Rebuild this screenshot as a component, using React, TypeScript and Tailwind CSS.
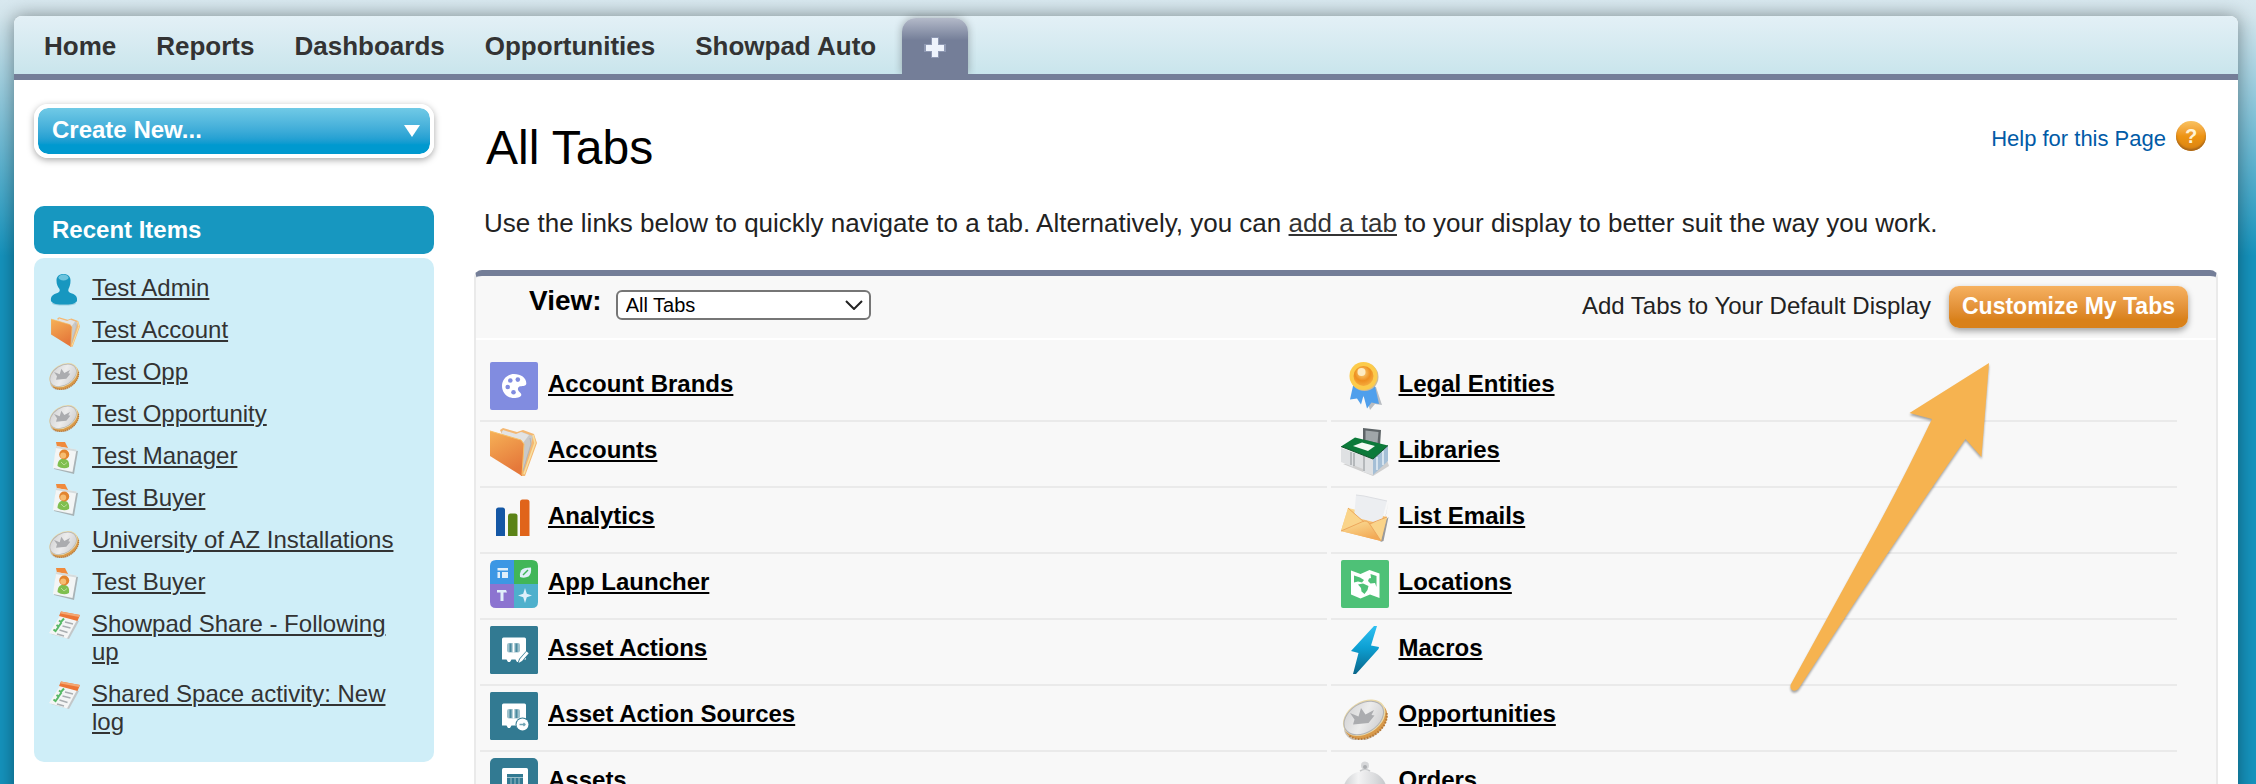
import { FC, ReactNode } from "react";

type IconProps = {
  className?: string;
};

type LinkItem = {
  label: string;
  Icon: FC<IconProps>;
};

const Svg = ({
  className,
  size = 48,
  children,
}: {
  className?: string;
  size?: number;
  children: ReactNode;
}) => (
  <svg
    className={className}
    viewBox={`0 0 ${size} ${size}`}
    fill="none"
    aria-hidden="true"
  >
    {children}
  </svg>
);

const UserIcon: FC<IconProps> = ({ className }) => (
  <Svg className={className} size={32}>
    <ellipse cx="16" cy="29.500" rx="12" ry="2" fill="#9fcfdf" />
    <path
      d="M15.500 0C20 0 22.500 2.500 22.500 6.500c0 4-.8 6-2 8.500-.8 2 .3 3.500 3.500 4.500 4 1.500 5.500 3.500 5 7.500-1.500 3-7 3.500-13 3.500S4.500 30 3 27c-.5-4 1-6 5-7.500 3.200-1 4.300-2.500 3.500-4.500-1.800-2.500-3-4.500-3-8.500C8.500 2.500 11 0 15.500 0z"
      fill="#1797c0"
    />
    <ellipse cx="15.500" cy="3.500" rx="5" ry="3" fill="#6cc3dd" />
  </Svg>
);

const FolderShapes = ({ id }: { id: string }) => (
  <>
    <defs>
      <linearGradient id={id} x1="0" y1="0" x2="0.400" y2="1">
        <stop offset="0" stopColor="#f6b157" />
        <stop offset="1" stopColor="#e5783a" />
      </linearGradient>
    </defs>
    <path d="M10 2l3-2 14 4 6-2 11 4 3 9-12 33h-4z" fill="#f4b873" />
    <path d="M11 3l15 4 6-3 11 4-2 8-8 26z" fill="#c9c9c9" />
    <path d="M13 2l13 4 5-2 8 3-6 8-22-9z" fill="#e3e3e3" />
    <path d="M43 7l2 8-11 31" stroke="#f8e0a0" strokeWidth="1.500" />
    <path d="M40 10l1 6-8 27" stroke="#b5b5b5" />
    <path d="M0 3l31 9 3 4-2 32L0 28z" fill={`url(#${id})`} />
    <path d="M0 3l31 9 3 4-2 31" stroke="#f6c069" />
  </>
);

const AccountIcon: FC<IconProps> = ({ className }) => (
  <Svg className={className}>
    <FolderShapes id="folder" />
  </Svg>
);

const SmallAccountIcon: FC<IconProps> = ({ className }) => (
  <svg className={className} viewBox="-5 0 52 48" aria-hidden="true" fill="none">
    <FolderShapes id="folder-small" />
  </svg>
);

const CoinIcon: FC<IconProps> = ({ className }) => (
  <Svg className={className}>
    <defs>
      <linearGradient id="coin-face" x1="0" y1="0" x2="1" y2="1">
        <stop offset="0" stopColor="#d0d0d1" />
        <stop offset="0.500" stopColor="#ececec" />
        <stop offset="1" stopColor="#cacacc" />
      </linearGradient>
    </defs>
    <g transform="rotate(-32 24 27)">
      <ellipse cx="22.500" cy="30" rx="23" ry="16.500" fill="#c9c2b8" />
      <ellipse cx="24" cy="29" rx="23" ry="16.500" fill="#d99a4a" />
      <path
        d="M2 33c6 16 38 17 44-1"
        stroke="#b5793a"
        strokeWidth="2"
        strokeDasharray="1.500 1.500"
      />
      <ellipse cx="24" cy="25.500" rx="23" ry="16" fill="#ead9a8" />
      <ellipse cx="23.500" cy="25.500" rx="22" ry="15" fill="#b2b2b4" />
      <ellipse cx="23.500" cy="25.500" rx="21" ry="14" fill="url(#coin-face)" />
    </g>
    <path
      d="M9 21l8.500 3.500L20 16l4.500 6.500L33 18l-2.500 5 3 .5-6 7.500L12 32.500l1.500-5z"
      fill="#abacaf"
    />
  </Svg>
);

const ContactIcon: FC<IconProps> = ({ className }) => (
  <Svg className={className} size={32}>
    <path d="M8 0h9l3 6-2 2-9-3z" fill="#f08a3c" />
    <path d="M8 5l22 4-4 23L6 27z" fill="#a9b3b6" />
    <path d="M8 4l20.500 3.500-4 22.500L5 26z" fill="#f3f5f5" />
    <path d="M8 4l20.500 3.500-.4 2L7.700 6z" fill="#d6dcdd" />
    <path d="M9.500 24c.3-5 2.500-7.500 6.300-7.200 4 .3 6 3.200 5.200 8.200-3.500 2-8 1.500-11.500-1z" fill="#7fbf4f" />
    <path d="M13 20l3 3 3-2.500" stroke="#b9dc95" />
    <circle cx="16.200" cy="12.500" r="5" fill="#e2852f" />
    <circle cx="15.200" cy="13.500" r="3" fill="#f6bd72" />
  </Svg>
);

const TaskIcon: FC<IconProps> = ({ className }) => (
  <Svg className={className} size={32}>
    <path d="M13 7l18 4-10 18L3 24z" fill="#c2c7c9" />
    <path d="M12 6l17 4-10 18.500L1 23z" fill="#f4f5f5" />
    <path d="M13 1.500L32 5l-2.500 6L11 6z" fill="#ec7636" />
    <path d="M13 1.500L32 5l-1 2-18.500-3.500z" fill="#f4a873" />
    <path
      d="M17 12l8 2M14.500 16l8 2M11.500 20l8 2.500M9 24l7 2"
      stroke="#a9aeb1"
      strokeWidth="1.500"
    />
    <path
      d="M11 10.500l2 1.500 3-3.500M8.500 15l2 1.500 3-4M5.500 19.500l2 1.500 3-4"
      stroke="#57b966"
      strokeWidth="2"
    />
  </Svg>
);

const BrandIcon: FC<IconProps> = ({ className }) => (
  <Svg className={className}>
    <rect width="48" height="48" rx="2" fill="#818ce0" />
    <path
      d="M24 12c7 0 12.500 4 12.300 9.500-.2 2.700-3.300 2.500-5.800 2.700-3 .4-3.500 3.800-1 5.800 2.400 1.800 2.400 4 0 5-1.800.8-3.800 1-5.500 1-7 0-12-5.400-12-12 0-7 5.500-12 12-12z"
      fill="#fff"
    />
    <g fill="#818ce0">
      <circle cx="20.300" cy="18.500" r="2.300" />
      <circle cx="27.800" cy="17.600" r="2.300" />
      <circle cx="17.700" cy="25" r="2.300" />
      <circle cx="23.500" cy="30.300" r="2.300" />
    </g>
  </Svg>
);

const AnalyticsIcon: FC<IconProps> = ({ className }) => (
  <Svg className={className}>
    <path d="M6 42V16q0-2.500 2.500-2.500h4q2.500 0 2.500 2.500v26z" fill="#1457a5" />
    <path d="M18 42V22q0-2.500 2.500-2.500h4.500q2.500 0 2.500 2.500v20z" fill="#5b8317" />
    <path d="M30 42V8q0-2.500 2.500-2.500H37q2.500 0 2.500 2.500v34z" fill="#e0641a" />
  </Svg>
);

const LauncherIcon: FC<IconProps> = ({ className }) => (
  <Svg className={className}>
    <path d="M24 0v24H0V6q0-6 6-6z" fill="#3c97e4" />
    <path d="M24 0h18q6 0 6 6v18H24z" fill="#41b658" />
    <path d="M0 24h24v24H6q-6 0-6-6z" fill="#8c74d0" />
    <path d="M24 24h24v18q0 6-6 6H24z" fill="#4eb0cc" />
    <g fill="#e0effa">
      <path d="M7.500 8H18v2.500H7.500zM7.500 12H10v6H7.500zM12 12h6v6h-6z" />
      <path d="M31 10.500q2-3 10-3 .8 6-2.500 9-4 2-8.500.5-.5-3.500 1-6.500z" />
      <path d="M7 30h9l1 2.500h-3.500V41h-3v-8.500H7z" />
      <path d="M35 28l1.800 5.700 5.200 1.800-5.200 1.800L35 43l-1.800-5.700-5.200-1.800 5.200-1.800z" />
    </g>
    <path d="M33 15l5-5" stroke="#41b658" strokeWidth="1.500" />
  </Svg>
);

// White safe shared by the asset action tabs.
const Safe = () => (
  <>
    <path
      d="M13.500 11.500h21q1.500 0 1.500 1.500v20.500h-5.500l-1.500 2.500h-2l-1.500-2.500h-4L20 36h-2l-1.500-2.500H12V13q0-1.500 1.500-1.500z"
      fill="#fff"
    />
    <rect x="17" y="17" width="13" height="9.500" rx="2" fill="#9fc2cd" />
    <path d="M20.500 17.500v8.500M26.500 17.500v8.500" stroke="#4b8a9f" strokeWidth="2" />
    <path d="M23.500 17v9.500" stroke="#fff" strokeWidth="1.500" />
  </>
);

const AssetActionIcon: FC<IconProps> = ({ className }) => (
  <Svg className={className}>
    <rect width="48" height="48" rx="1.500" fill="#327a92" />
    <Safe />
    <path d="M27 39l2-6 8-9 3.500 3-8 8.500z" fill="#327a92" />
    <path d="M28.500 37l1.500-4 6.500-7.500 2.200 1.800-6.700 7.700z" fill="#fff" />
  </Svg>
);

const AssetSourceIcon: FC<IconProps> = ({ className }) => (
  <Svg className={className}>
    <rect width="48" height="48" rx="1.500" fill="#327a92" />
    <Safe />
    <circle cx="32.500" cy="32.500" r="7" fill="#327a92" />
    <circle cx="32.500" cy="32.500" r="6" fill="#fff" />
    <path d="M29.500 32.500h6m-2-1.500l1.500 1.500-1.500 1.500" stroke="#6fa3b3" strokeWidth="1.300" />
  </Svg>
);

const AssetIcon: FC<IconProps> = ({ className }) => (
  <Svg className={className}>
    <rect width="48" height="48" rx="5" fill="#327a92" />
    <rect x="12" y="10" width="26" height="25" rx="1.500" fill="#fff" />
    <rect x="17" y="16" width="16" height="13" fill="#327a92" />
    <path d="M17 19.500h16M21 19v10M25 19v10M29 19v10" stroke="#9cc0cb" />
  </Svg>
);

const LegalIcon: FC<IconProps> = ({ className }) => (
  <Svg className={className}>
    <defs>
      <radialGradient id="medal" cx="0.450" cy="0.350" r="0.650">
        <stop offset="0" stopColor="#fbd37d" />
        <stop offset="0.600" stopColor="#ee8f20" />
        <stop offset="1" stopColor="#f5ab3d" />
      </radialGradient>
    </defs>
    <path d="M13 26l13 12 3 10 5-6 7 1-6-18z" fill="#b9bdc2" />
    <path d="M12 24L9 37.500l7-1 4 6 2.500-9 3.500 13 4.500-6 7.500 1.500L34 24z" fill="#4f9fec" />
    <circle cx="23.500" cy="15" r="14" fill="#cbbb9a" />
    <circle cx="22.500" cy="14" r="14" fill="#fccb4b" />
    <circle cx="22.500" cy="14" r="10" fill="url(#medal)" />
    <circle cx="20.500" cy="10" r="4" fill="#fdebc2" />
  </Svg>
);

const LibraryIcon: FC<IconProps> = ({ className }) => (
  <Svg className={className}>
    <path d="M2 36l30 12 16-10-2-6z" fill="#cfcfcf" />
    <path d="M22 0l18 2-1 16-17-4z" fill="#5e6467" />
    <path d="M24.500 2.500l13 1.500-1 11-12-3z" fill="#a0a6a9" />
    <path d="M0 20l32 11v16l-10-3v-3l-10-4v2L0 34z" fill="#dfe1e3" />
    <path d="M10 24v13M13 25v13M23 28v15" stroke="#8c9195" />
    <path d="M32 31l15-14v16L32 47z" fill="#a5bfd6" />
    <path d="M36 29v13M42 23v14" stroke="#d6e3ee" strokeWidth="2" />
    <path d="M0 18.500L14 9.500l33 8L32 31z" fill="#0c7a3a" />
    <path d="M0 18.500L32 31l15-13.500" stroke="#14522d" />
    <path d="M12 18l9-3.500L34 18l-7 5z" fill="#f4faf5" />
  </Svg>
);

const EmailIcon: FC<IconProps> = ({ className }) => (
  <Svg className={className}>
    <defs>
      <linearGradient id="envelope" x1="0" y1="0" x2="0.500" y2="1">
        <stop offset="0" stopColor="#fbe09a" />
        <stop offset="1" stopColor="#f2a955" />
      </linearGradient>
    </defs>
    <path d="M47.500 8l-4 19 4-4-5 24-3 1z" fill="#9b9b9b" />
    <path d="M7 14l39 9-6 24L0 37z" fill="url(#envelope)" />
    <path d="M15 1l8 1 23 5-6 23-27-7z" fill="#eceef1" />
    <path d="M15 1l8 1 23 5" stroke="#dcdee2" />
    <path d="M7 14l16 14L0 37zM46 23l-18 8 12 16z" fill="#fad48a" />
    <path d="M0 37l23-10q3-.5 5 2l12 18z" fill="url(#envelope)" />
    <path d="M7 14l16 14M46 23l-18 7M0 37l23-10q3-.5 5 2l12 18" stroke="#eca75c" />
  </Svg>
);

const LocationIcon: FC<IconProps> = ({ className }) => (
  <Svg className={className}>
    <rect width="48" height="48" rx="2" fill="#4ec177" />
    <path
      d="M10 10.500L19.500 14l9-4 10 3.500V38l-9.500-3.500-9.500 4L10 34.500z"
      fill="#fff"
    />
    <path d="M13 15.500l6 2 4 2.500-2 2.500-4-1-4 1z" fill="#4ec177" />
    <path d="M17 24.500l5-1 5.500 2.500-1 4-3 4-3-2.500-.5-3.500z" fill="#4ec177" />
    <path d="M29.500 14l6 2V27l-1.500-4-4.500.5-2.500-2.500 1-2.500 2-.5z" fill="#4ec177" />
  </Svg>
);

const MacroIcon: FC<IconProps> = ({ className }) => (
  <Svg className={className}>
    <defs>
      <linearGradient id="bolt" x1="0" y1="0" x2="0" y2="1">
        <stop offset="0" stopColor="#2fc0f2" />
        <stop offset="0.450" stopColor="#0da0d3" />
        <stop offset="1" stopColor="#0a668a" />
      </linearGradient>
    </defs>
    <path d="M33 0h3l-6 19.500 8 1.500-.5 2L15 48h-3l5.500-21-7.500-2z" fill="url(#bolt)" />
  </Svg>
);

const OrderIcon: FC<IconProps> = ({ className }) => (
  <Svg className={className}>
    <defs>
      <linearGradient id="dome" x1="0" y1="0" x2="1" y2="0">
        <stop offset="0" stopColor="#cdcfd1" />
        <stop offset="0.350" stopColor="#f3f3f4" />
        <stop offset="0.700" stopColor="#dcdddf" />
        <stop offset="1" stopColor="#c3c5c8" />
      </linearGradient>
    </defs>
    <ellipse cx="24" cy="35" rx="24" ry="11" fill="#8fa7cf" />
    <path d="M2 34c0-12 9-21 22-21s22 9 22 21c-12 6-32 6-44 0z" fill="url(#dome)" />
    <path d="M19 13q5-3 10 0" stroke="#c6c8ca" strokeWidth="1.500" />
    <circle cx="24" cy="7.500" r="4" fill="#d6d7d9" />
    <circle cx="24" cy="9" r="2" fill="#acaeb1" />
  </Svg>
);

const navTabs = [
  "Home",
  "Reports",
  "Dashboards",
  "Opportunities",
  "Showpad Auto",
];

const recentItems: LinkItem[] = [
  { label: "Test Admin", Icon: UserIcon },
  { label: "Test Account", Icon: SmallAccountIcon },
  { label: "Test Opp", Icon: CoinIcon },
  { label: "Test Opportunity", Icon: CoinIcon },
  { label: "Test Manager", Icon: ContactIcon },
  { label: "Test Buyer", Icon: ContactIcon },
  { label: "University of AZ Installations", Icon: CoinIcon },
  { label: "Test Buyer", Icon: ContactIcon },
  { label: "Showpad Share - Following up", Icon: TaskIcon },
  { label: "Shared Space activity: New log", Icon: TaskIcon },
];

const tabRows: [LinkItem, LinkItem][] = [
  [
    { label: "Account Brands", Icon: BrandIcon },
    { label: "Legal Entities", Icon: LegalIcon },
  ],
  [
    { label: "Accounts", Icon: AccountIcon },
    { label: "Libraries", Icon: LibraryIcon },
  ],
  [
    { label: "Analytics", Icon: AnalyticsIcon },
    { label: "List Emails", Icon: EmailIcon },
  ],
  [
    { label: "App Launcher", Icon: LauncherIcon },
    { label: "Locations", Icon: LocationIcon },
  ],
  [
    { label: "Asset Actions", Icon: AssetActionIcon },
    { label: "Macros", Icon: MacroIcon },
  ],
  [
    { label: "Asset Action Sources", Icon: AssetSourceIcon },
    { label: "Opportunities", Icon: CoinIcon },
  ],
  [
    { label: "Assets", Icon: AssetIcon },
    { label: "Orders", Icon: OrderIcon },
  ],
];

const TabBar = () => (
  <nav className="flex items-stretch h-16 rounded-t-lg border-b-6 border-[#747e98] bg-linear-to-b from-[#e3f0f6] to-[#c9e5ec] pl-[30px]">
    <ul className="flex items-center gap-10 pt-0.5">
      {navTabs.map((tab) => (
        <li key={tab}>
          <a
            href="#"
            className="block font-bold text-[26px] text-[#333] leading-[30px]"
          >
            {tab}
          </a>
        </li>
      ))}
    </ul>
    <a
      href="#"
      aria-label="All Tabs"
      className="flex justify-center items-center bg-linear-to-b from-[#b4bac9] via-[#747e98] via-40% to-[#747e98] shadow-[0_0_8px_rgba(0,0,0,0.3)] mt-0.5 ml-[26px] rounded-t-[14px] w-[66px] [clip-path:inset(-8px_-8px_0_-8px)]"
    >
      <svg viewBox="0 0 24 24" className="mt-1 w-6 h-6" aria-hidden="true">
        <path
          d="M8 1h8v7h7v8h-7v6H8v-6H1V8h7z"
          fill="#8f99b3"
        />
        <path d="M9 2h6v7h6v6h-6v6H9v-6H3V9h6z" fill="#eef3fc" />
      </svg>
    </a>
  </nav>
);

const Sidebar = () => (
  <aside className="w-[400px] shrink-0 pt-6">
    <button
      type="button"
      className="flex justify-between items-center bg-linear-to-b from-[#70cae6] to-[#0099cf] to-80% bg-clip-padding shadow-[0_2px_7px_rgba(0,0,0,0.35)] px-3.5 border-4 border-white rounded-[14px] w-full h-[54px] font-bold text-white text-2xl"
    >
      <span className="pb-0.5 leading-7">Create New...</span>
      <svg viewBox="0 0 16 12" className="-mr-1 w-4 h-3" aria-hidden="true">
        <path d="M0 0h16L8 12z" fill="#fff" />
      </svg>
    </button>

    <h2 className="bg-[#1797c0] mt-12 px-[18px] py-2.5 rounded-[10px] font-bold text-2xl text-white leading-7">
      Recent Items
    </h2>
    <ul className="flex flex-col gap-2.5 bg-[#cfeef8] mt-1 pt-4 pr-5 pb-[22px] pl-3.5 rounded-[10px]">
      {recentItems.map(({ label, Icon }, index) => (
        <li key={index} className="flex items-start gap-3">
          <Icon className="w-8 h-8 shrink-0" />
          <a
            href="#"
            className="pb-1 text-[#333] text-2xl underline decoration-2 underline-offset-2 leading-7"
          >
            {label}
          </a>
        </li>
      ))}
    </ul>
  </aside>
);

const TabCell = ({ label, Icon }: LinkItem) => (
  <td className="pt-1.5 pb-2.5 pl-2.5 border-[#eaeaea] border-b-2 w-1/2">
    <div className="flex items-center gap-2.5">
      <Icon className="w-12 h-12 shrink-0" />
      <a
        href="#"
        className="pb-1 font-bold text-2xl text-black underline decoration-2 underline-offset-2 leading-7"
      >
        {label}
      </a>
    </div>
  </td>
);

const Arrow = () => (
  <svg
    viewBox="1780 355 220 345"
    className="top-[79px] right-[216px] absolute drop-shadow-[0_2px_1px_rgba(0,0,0,0.35)] w-[220px] h-[345px] pointer-events-none"
    aria-hidden="true"
  >
    <path
      d="M1989 363L1909.500 413 1932 419Q1898 490 1864 551L1791 684C1788.500 690 1795 693.500 1799 688Q1880 562 1965.500 439L1981.500 457z"
      fill="#f6b350"
    />
  </svg>
);

const TabsPanel = () => (
  <section className="relative bg-[#f8f8f8] mt-8 border-[#eaeaea] border-x-2 border-t-6 border-t-[#747e98] rounded-t-lg grow">
    <div className="flex items-center pr-7 pl-[53px] border-white border-b-2 h-16">
      <label
        htmlFor="view"
        className="pb-3 font-bold text-[28px] text-black leading-8"
      >
        View:
      </label>
      <div className="relative mb-1 ml-3.5">
        <select
          id="view"
          defaultValue="all"
          className="block bg-white pl-2 border-2 border-[#767676] rounded-md w-[255px] h-[30px] text-black text-xl leading-[26px] appearance-none"
        >
          <option value="all">All Tabs</option>
        </select>
        <svg
          viewBox="0 0 18 10"
          className="top-2.5 right-2 absolute w-[18px] h-2.5 pointer-events-none"
          fill="none"
          aria-hidden="true"
        >
          <path d="M1 1l8 8 8-8" stroke="#222" strokeWidth="2" />
        </svg>
      </div>
      <span className="mr-[18px] ml-auto pb-0.5 text-2xl text-[#222] leading-7">
        Add Tabs to Your Default Display
      </span>
      <button
        type="button"
        className="bg-linear-to-b from-[#f6b160] to-[#d9811a] to-80% shadow-[0_3px_6px_rgba(0,0,0,0.35)] px-[13px] pb-0.5 rounded-[10px] h-[42px] font-bold text-[23px] text-white leading-7"
      >
        Customize My Tabs
      </button>
    </div>

    <div className="pt-4 pr-[35px]">
      <table className="border-separate border-spacing-x-1 border-spacing-y-0 w-full table-fixed">
        <tbody>
          {tabRows.map(([left, right]) => (
            <tr key={left.label}>
              <TabCell {...left} />
              <TabCell {...right} />
            </tr>
          ))}
        </tbody>
      </table>
    </div>

    <Arrow />
  </section>
);

const HelpLink = () => (
  <a
    href="#"
    className="flex items-center gap-2.5 mr-3 text-[#015ba7] text-[22px] leading-[26px]"
  >
    <span className="pt-1.5">Help for this Page</span>
    <span className="flex justify-center items-center bg-linear-to-b from-[#f9c25e] via-[#ee9412] to-[#d98312] shadow-[inset_0_-2px_2px_#a8661a] rounded-full w-[30px] h-[30px] font-bold text-[#fff3d6] text-xl">
      ?
    </span>
  </a>
);

const App = () => {
  return (
    <div className="bg-[#1593bd] bg-[linear-gradient(to_bottom,#d8e8ef_0px,#d3e5ec_16px,#1593bd_256px)] bg-no-repeat pt-4 pr-[18px] pl-3.5 h-screen overflow-hidden font-['Liberation_Sans',Arial,sans-serif]">
      <div className="flex flex-col bg-white shadow-[0_0_18px_rgba(0,0,0,0.4)] rounded-t-lg min-h-full">
        <TabBar />
        <div className="flex gap-10 px-5 grow">
          <Sidebar />
          <main className="flex flex-col min-w-0 grow">
            <div className="flex justify-between items-start pt-10">
              <h1 className="pl-3 text-5xl text-black leading-14">All Tabs</h1>
              <HelpLink />
            </div>
            <p className="mt-8 pl-2.5 text-[#222] text-[26px] leading-[30px]">
              Use the links below to quickly navigate to a tab. Alternatively,
              you can{" "}
              <a
                href="#"
                className="text-[#333] underline decoration-2 underline-offset-2"
              >
                add a tab
              </a>{" "}
              to your display to better suit the way you work.
            </p>
            <TabsPanel />
          </main>
        </div>
      </div>
    </div>
  );
};

export default App;
